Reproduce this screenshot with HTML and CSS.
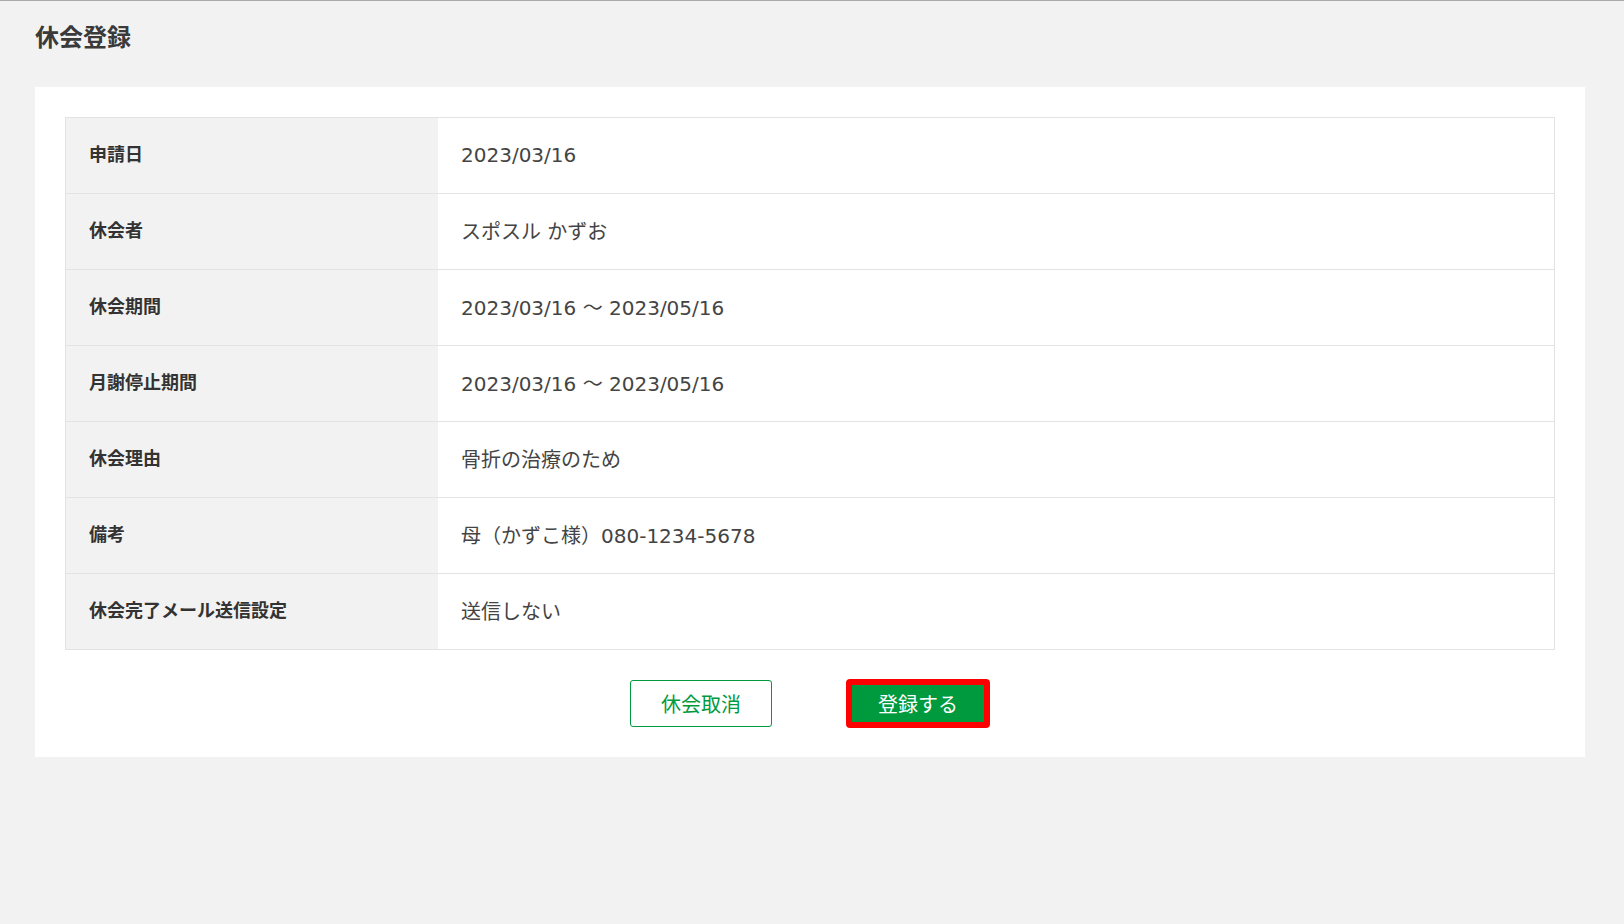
FILE: index.html
```html
<!DOCTYPE html>
<html lang="ja">
<head>
    <meta charset="UTF-8">
    <meta name="viewport" content="width=device-width, initial-scale=1.0">
    <title>休会登録</title>
    <link rel="stylesheet" href="styles.css">
</head>
<body>
    <h1 class="page-title">休会登録</h1>

    <div class="panel">
        <table class="detail-table">
            <tr>
                <th>申請日</th>
                <td>2023/03/16</td>
            </tr>
            <tr>
                <th>休会者</th>
                <td>スポスル かずお</td>
            </tr>
            <tr>
                <th>休会期間</th>
                <td>2023/03/16 ～ 2023/05/16</td>
            </tr>
            <tr>
                <th>月謝停止期間</th>
                <td>2023/03/16 ～ 2023/05/16</td>
            </tr>
            <tr>
                <th>休会理由</th>
                <td>骨折の治療のため</td>
            </tr>
            <tr>
                <th>備考</th>
                <td>母（かずこ様）080-1234-5678</td>
            </tr>
            <tr>
                <th>休会完了メール送信設定</th>
                <td>送信しない</td>
            </tr>
        </table>

        <div class="actions">
            <button class="btn btn-cancel">休会取消</button>
            <button class="btn btn-submit">登録する</button>
        </div>
    </div>
</body>
</html>
```

FILE: styles.css
```css
body {
    margin: 0;
    padding: 0;
    min-height: 100vh;
    background: #f2f2f2;
    border-top: 1px solid #a9a9a9;
    color: #333;
    font-family: "DejaVu Sans", "Noto Sans CJK JP", sans-serif;
}

.page-title {
    margin: 0;
    padding: 19px 35px 0;
    height: 32px;
    line-height: 32px;
    font-size: 24px;
    font-weight: bold;
    color: #3a3a3a;
    font-family: "Noto Sans CJK JP", sans-serif;
}

.panel {
    margin: 35px 39px 0 35px;
    padding: 30px 30px 29px;
    background: #fff;
}

.detail-table {
    width: 100%;
    border-collapse: collapse;
    border: 1px solid #e3e3e3;
}

.detail-table th,
.detail-table td {
    border-bottom: 1px solid #e3e3e3;
    text-align: left;
    vertical-align: middle;
}

.detail-table th {
    width: 326px;
    height: 70px;
    padding: 0 23px 5px;
    background: #f2f2f2;
    font-size: 18px;
    font-weight: bold;
    color: #333;
    font-family: "Noto Sans CJK JP", sans-serif;
}

.detail-table td {
    height: 73px;
    padding: 0 23px 2px;
    font-size: 20px;
    color: #444;
}

.actions {
    display: flex;
    justify-content: center;
    align-items: center;
    gap: 74px;
    margin-top: 29px;
}

.btn {
    font-family: "DejaVu Sans", "Noto Sans CJK JP", sans-serif;
    font-size: 20px;
    cursor: pointer;
    box-sizing: border-box;
}

.btn-cancel {
    width: 142px;
    height: 47px;
    background: #fff;
    color: #009a3e;
    border: 1px solid #009a3e;
    border-radius: 3px;
}

.btn-submit {
    width: 144px;
    height: 49px;
    background: #009a3e;
    color: #fff;
    border: 6px solid #ff0000;
    border-radius: 4px;
}
```
